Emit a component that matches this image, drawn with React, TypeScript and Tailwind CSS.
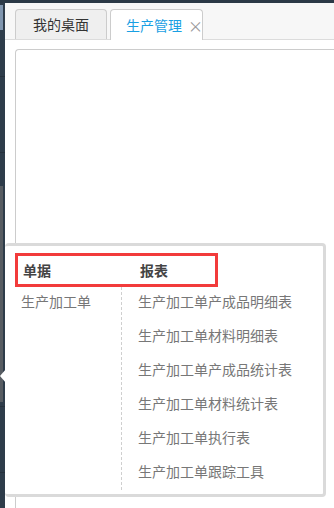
import React from "react";

const font = { fontFamily: '"Noto Sans CJK SC", "Noto Sans", sans-serif' };

export default function App() {
  const reports = [
    "生产加工单产成品明细表",
    "生产加工单材料明细表",
    "生产加工单产成品统计表",
    "生产加工单材料统计表",
    "生产加工单执行表",
    "生产加工单跟踪工具",
  ];
  return (
    <div className="relative w-[334px] h-[508px] overflow-hidden bg-white flex flex-col" style={font}>
      <div className="h-[3px] bg-[#2b3946] shrink-0" />
      <div className="flex flex-1 min-h-0">
        {/* sidebar */}
        <div className="w-[5px] bg-[#2e3c4a] flex flex-col shrink-0">
          <div className="h-[2px]" />
          <div className="h-[25px] w-[3px] bg-[#7f95ae]" />
          <div className="h-[46px]" />
          <div className="h-px bg-[#26313c]" />
          <div className="h-[75px]" />
          <div className="h-px bg-[#26313c]" />
          <div className="h-[33px]" />
          <div className="h-[216px] w-[3px] bg-[#575c62]" />
          <div className="h-[4px]" />
          <div className="h-px bg-[#26313c]" />
          <div className="h-[65px]" />
          <div className="h-px bg-[#26313c]" />
        </div>
        {/* main */}
        <div className="flex-1 flex flex-col min-w-0">
          <div className="h-[37px] bg-[#f7f7f7] border-b border-[#dcdcdc] flex items-end pl-[10px] gap-[3px] shrink-0">
            <div className="w-[92px] h-[30px] shrink-0 whitespace-nowrap bg-[#efefef] border border-b-0 border-[#cccccc] rounded-t-[4px] flex items-center justify-center text-[14px] text-[#333]">
              我的桌面
            </div>
            <div className="w-[93px] h-[31px] shrink-0 whitespace-nowrap -mb-px bg-white border border-b-0 border-[#cccccc] rounded-t-[4px] flex items-center pl-[15px] gap-[6px] text-[14px]">
              <span className="text-[#19a0e3] shrink-0">生产管理</span>
              <span className="text-[#999] text-[15px] leading-none shrink-0">×</span>
            </div>
          </div>
          <div className="flex-1 pt-[9px] pl-[10px]">
            <div className="h-full border-l border-t border-[#cccccc] rounded-tl-[4px]" />
          </div>
        </div>
      </div>

      {/* popup */}
      <div className="absolute left-[5px] top-[243px] w-[321px] bg-white border-[3px] border-l-0 border-[#dadada] rounded-[4px] flex flex-col">
        <div className="mt-[7px] ml-[10px] w-[203px] h-[34px] border-[3px] border-[#f23b3b] flex items-center pl-[5px] text-[14px] font-bold text-[#444]">
          <span className="w-[117px]">单据</span>
          <span>报表</span>
        </div>
        <div className="flex pb-[4px]">
          <div className="w-[117px] border-r border-dashed border-[#cfcfcf] pl-[16px] pt-[4px] text-[14px] text-[#777] leading-[20px]">
            生产加工单
          </div>
          <div className="flex flex-col gap-[14px] pl-[16px] pt-[4px] pb-[9px] text-[14px] text-[#777] leading-[20px]">
            {reports.map((r) => (
              <div key={r}>{r}</div>
            ))}
          </div>
        </div>
      </div>
      {/* notch */}
      <div className="absolute left-0 top-[369px] w-0 h-0 border-y-[7px] border-y-transparent border-r-[6px] border-r-white" />
    </div>
  );
}
